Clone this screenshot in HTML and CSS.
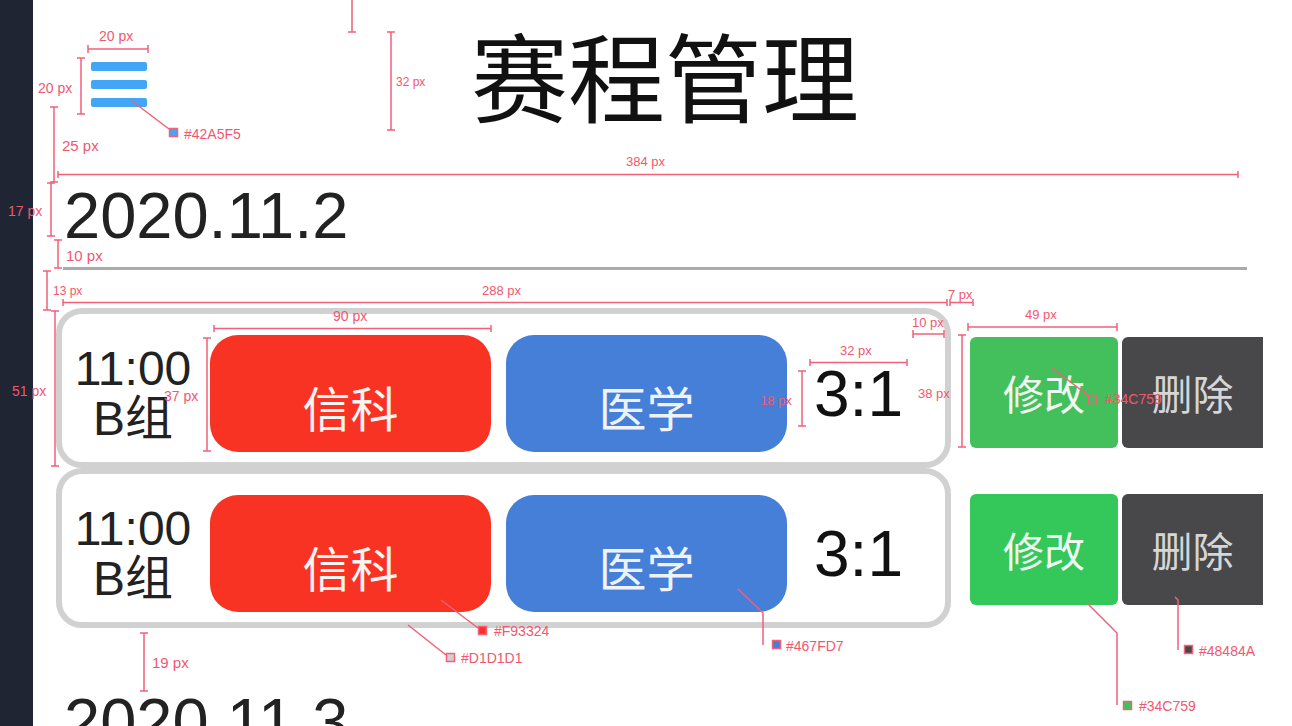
FILE: index.html
```html
<!DOCTYPE html>
<html lang="zh">
<head>
<meta charset="utf-8">
<title>赛程管理</title>
<link rel="stylesheet" href="styles.css">
</head>
<body>
<aside class="sidebar"></aside>
<main class="page">
  <header class="header">
    <div class="menu"><span></span><span></span><span></span></div>
    <h1 class="title">赛程管理</h1>
  </header>
  <section class="day">
    <h2 class="date">2020.11.2</h2>
    <hr class="divider">
    <div class="matches">
      <div class="match match-first">
        <div class="card">
          <div class="time">11:00<br>B组</div>
          <div class="team team-red">信科</div>
          <div class="team team-blue">医学</div>
          <div class="score">3:1</div>
        </div>
        <div class="actions">
          <button class="btn btn-edit">修改</button>
          <button class="btn btn-del">删除</button>
        </div>
      </div>
      <div class="match match-second">
        <div class="card">
          <div class="time">11:00<br>B组</div>
          <div class="team team-red">信科</div>
          <div class="team team-blue">医学</div>
          <div class="score">3:1</div>
        </div>
        <div class="actions">
          <button class="btn btn-edit">修改</button>
          <button class="btn btn-del">删除</button>
        </div>
      </div>
    </div>
  </section>
  <section class="day day-next">
    <h2 class="date">2020.11.3</h2>
  </section>
</main>
<svg class="notes" width="1292" height="726" viewBox="0 0 1292 726">
  <g class="note-lines">
    <path d="M352 0V32 M348 32H356"/>
    <path d="M391 32V130 M387 32H395 M387 130H395"/>
    <path d="M88 49H148 M88 45V53 M148 45V53"/>
    <path d="M81 58V114 M77 58H85 M77 114H85"/>
    <path d="M132 101L169 129"/>
    <path d="M54 107V182 M50 107H58 M50 182H58"/>
    <path d="M58 174.5H1238 M58 171V178 M1238 171V178"/>
    <path d="M51 183V236 M47 183H55 M47 236H55"/>
    <path d="M58 240V268 M54 240H62 M54 268H62"/>
    <path d="M47 271V310 M43 271H51 M43 310H51"/>
    <path d="M63 302.5H947 M63 299V306 M947 299V306"/>
    <path d="M950 302.5H973 M950 299V306 M973 299V306"/>
    <path d="M55 311V466 M51 311H59 M51 466H59"/>
    <path d="M214 328.5H491 M214 325V332 M491 325V332"/>
    <path d="M207 338V451 M203 338H211 M203 451H211"/>
    <path d="M810 362.5H907 M810 359V366 M907 359V366"/>
    <path d="M802 371V426 M798 371H806 M798 426H806"/>
    <path d="M913 334H944 M913 330V338 M944 330V338"/>
    <path d="M962 335V447 M958 335H966 M958 447H966"/>
    <path d="M968 327H1117 M968 323V331 M1117 323V331"/>
    <path d="M1052 368L1089 396"/>
    <path d="M441 600L478 628"/>
    <path d="M408 625L446 655"/>
    <path d="M738 589L763 613V645"/>
    <path d="M1088 604L1117 633V705"/>
    <path d="M1175 597L1178 600V650"/>
    <path d="M144 633V691 M140 633H148 M140 691H148"/>
  </g>
  <g class="note-swatches">
    <rect x="169.5" y="128.5" width="8" height="8" fill="#42A5F5"/>
    <rect x="1088.5" y="395.5" width="8" height="8" fill="none"/>
    <rect x="478.5" y="626.5" width="8" height="8" fill="#F93324"/>
    <rect x="446.5" y="653.5" width="8" height="8" fill="#D1D1D1"/>
    <rect x="772.5" y="640.5" width="8" height="8" fill="#467FD7"/>
    <rect x="1123.5" y="701.5" width="8" height="8" fill="#34C759"/>
    <rect x="1184.5" y="645.5" width="8" height="8" fill="#48484A"/>
  </g>
  <g class="note-text">
    <text x="99" y="41">20 px</text>
    <text x="38" y="93">20 px</text>
    <text x="184" y="139">#42A5F5</text>
    <text class="xs" x="396" y="86">32 px</text>
    <text class="lg" x="62" y="151">25 px</text>
    <text class="sm" x="626" y="166">384 px</text>
    <text x="8" y="216">17 px</text>
    <text class="lg" x="66" y="261">10 px</text>
    <text class="xs" x="53" y="295">13 px</text>
    <text class="sm" x="482" y="295">288 px</text>
    <text class="sm" x="948" y="299">7 px</text>
    <text x="333" y="321">90 px</text>
    <text class="sm" x="912" y="327">10 px</text>
    <text class="sm" x="1025" y="319">49 px</text>
    <text class="sm" x="840" y="355">32 px</text>
    <text x="12" y="396">51 px</text>
    <text x="164" y="401">37 px</text>
    <text class="sm" x="760" y="405">18 px</text>
    <text class="sm" x="918" y="398">38 px</text>
    <text x="1105" y="404">#34C759</text>
    <text x="494" y="636">#F93324</text>
    <text x="461" y="663">#D1D1D1</text>
    <text x="786" y="651">#467FD7</text>
    <text x="1199" y="656">#48484A</text>
    <text x="1139" y="711">#34C759</text>
    <text class="lg" x="152" y="668">19 px</text>
  </g>
</svg>
</body>
</html>
```
FILE: styles.css
```css
html, body {
  margin: 0;
  padding: 0;
}

body {
  position: relative;
  display: flex;
  width: 1292px;
  height: 726px;
  overflow: hidden;
  background: #ffffff;
  font-family: "Liberation Sans", "Noto Sans CJK SC", sans-serif;
}

.sidebar {
  flex: none;
  width: 33px;
  background: #1f2533;
}

.page {
  flex: 1;
  padding-left: 23px;
  overflow: hidden;
}

.header {
  display: flex;
  align-items: flex-start;
  height: 184px;
}

.menu {
  display: flex;
  flex-direction: column;
  gap: 9px;
  width: 56px;
  margin: 62px 0 0 35px;
}

.menu span {
  height: 9px;
  border-radius: 2px;
  background: #42a5f5;
}

.title {
  margin: 24px 0 0 324px;
  font-family: "Noto Sans CJK SC", sans-serif;
  font-size: 97px;
  font-weight: 400;
  line-height: 97px;
  color: #111111;
}

.date {
  margin: 0;
  padding-left: 8px;
  font-family: "Liberation Sans", sans-serif;
  font-size: 65px;
  font-weight: 400;
  line-height: 64px;
  color: #222222;
}

.divider {
  width: 1184px;
  height: 3px;
  margin: 19px 0 0 7px;
  border: 0;
  background: #aaaaaa;
}

.matches {
  margin-top: 38px;
}

.match {
  display: flex;
  align-items: flex-start;
  gap: 19px;
}

.card {
  display: flex;
  align-items: center;
  box-sizing: border-box;
  width: 895px;
  height: 160px;
  padding-top: 11px;
  border: 6px solid #d1d1d1;
  border-radius: 26px;
}

.time {
  width: 142px;
  text-align: center;
  font-size: 48px;
  line-height: 50px;
  color: #222222;
}

.team {
  display: flex;
  align-items: center;
  justify-content: center;
  box-sizing: border-box;
  width: 281px;
  height: 117px;
  margin-left: 6px;
  padding-top: 24px;
  border-radius: 28px;
  font-family: "Noto Sans CJK SC", sans-serif;
  font-size: 48px;
  line-height: 1;
  color: #fbf3f2;
}

.team-red {
  background: #f93324;
}

.team-blue {
  margin-left: 15px;
  background: #467fd7;
  color: #eef2fa;
}

.score {
  margin-left: 27px;
  font-size: 64px;
  line-height: 62px;
  color: #111111;
}

.actions {
  display: flex;
  gap: 4px;
  margin-top: 29px;
}

.match-second .actions {
  margin-top: 26px;
}

.btn {
  height: 111px;
  padding: 0;
  border: 0;
  border-radius: 6px;
  font-family: "Noto Sans CJK SC", sans-serif;
  font-size: 41px;
  line-height: 1;
}

.btn-edit {
  width: 148px;
  background: #34c759;
  color: #eef9f0;
}

.match-first .btn-edit {
  background: #43bf5c;
}

.btn-del {
  width: 141px;
  border-radius: 6px 0 0 6px;
  background: #48484a;
  color: #d6d6d6;
}

.day-next {
  margin-top: 62px;
}

.notes {
  position: absolute;
  left: 0;
  top: 0;
  pointer-events: none;
}

.note-lines path {
  fill: none;
  stroke: #f2607a;
  stroke-width: 1.5;
}

.note-swatches rect {
  stroke: #f2607a;
  stroke-width: 1.5;
}

.note-text text {
  font-family: "Liberation Sans", sans-serif;
  font-size: 14px;
  fill: #f2576f;
}

.note-text .sm {
  font-size: 13px;
}

.note-text .xs {
  font-size: 12px;
}

.note-text .lg {
  font-size: 15px;
}
```
